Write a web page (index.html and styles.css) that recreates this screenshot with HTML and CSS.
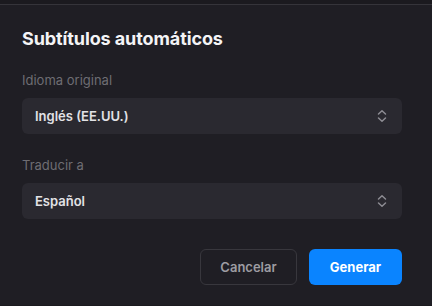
FILE: index.html
```html
<!DOCTYPE html>
<html lang="es">
<head>
<meta charset="utf-8">
<link rel="stylesheet" href="styles.css">
</head>
<body>
<div class="dialog">
  <h1 class="title">Subtítulos automáticos</h1>
  <div class="field">
    <div class="label">Idioma original</div>
    <div class="select">
      <span class="value">Inglés (EE.UU.)</span>
      <svg class="chev" width="10" height="14" viewBox="0 0 10 14"><path d="M1.5 5 L5 1.8 L8.5 5 M1.5 9 L5 12.2 L8.5 9" fill="none" stroke="#8d8c93" stroke-width="1.5" stroke-linecap="round" stroke-linejoin="round"/></svg>
    </div>
  </div>
  <div class="field">
    <div class="label">Traducir a</div>
    <div class="select">
      <span class="value">Español</span>
      <svg class="chev" width="10" height="14" viewBox="0 0 10 14"><path d="M1.5 5 L5 1.8 L8.5 5 M1.5 9 L5 12.2 L8.5 9" fill="none" stroke="#8d8c93" stroke-width="1.5" stroke-linecap="round" stroke-linejoin="round"/></svg>
    </div>
  </div>
  <div class="actions">
    <button class="btn cancel">Cancelar</button>
    <button class="btn primary">Generar</button>
  </div>
</div>
</body>
</html>
```
FILE: styles.css
```css
html, body {
  margin: 0;
  padding: 0;
  background: #1b1a1f;
  height: 100%;
}
body {
  font-family: Inter, "Noto Sans", sans-serif;
  padding-top: 4px;
  box-sizing: border-box;
}
.dialog {
  background: #1f1e24;
  border-top: 1px solid #35343a;
  height: 301px;
  box-sizing: border-box;
  padding: 22px 30px 0 22px;
}
.title {
  margin: 0;
  font-size: 18px;
  font-weight: 700;
  color: #f4f4f6;
  line-height: 24px;
  letter-spacing: -0.1px;
}
.field {
  margin-top: 21px;
}
.field + .field {
  margin-top: 23px;
}
.label {
  font-size: 13px;
  color: #6e6d73;
  line-height: 16px;
}
.select {
  margin-top: 10px;
  height: 36px;
  background: #2a2930;
  border-radius: 6px;
  display: flex;
  align-items: center;
  justify-content: space-between;
  padding: 0 15px 0 13px;
}
.value {
  font-size: 13px;
  font-weight: 600;
  color: #e2e2e6;
}
.chev {
  display: block;
}
.actions {
  display: flex;
  justify-content: flex-end;
  gap: 12px;
  margin-top: 30px;
}
.btn {
  height: 36px;
  border-radius: 6px;
  font-family: Inter, "Noto Sans", sans-serif;
  font-size: 13px;
  font-weight: 600;
  cursor: pointer;
}
.cancel {
  width: 97px;
  background: transparent;
  border: 1px solid #38373d;
  color: #9d9ca2;
}
.primary {
  width: 93px;
  background: #0a84ff;
  border: none;
  color: #ffffff;
  font-weight: 700;
}
```
